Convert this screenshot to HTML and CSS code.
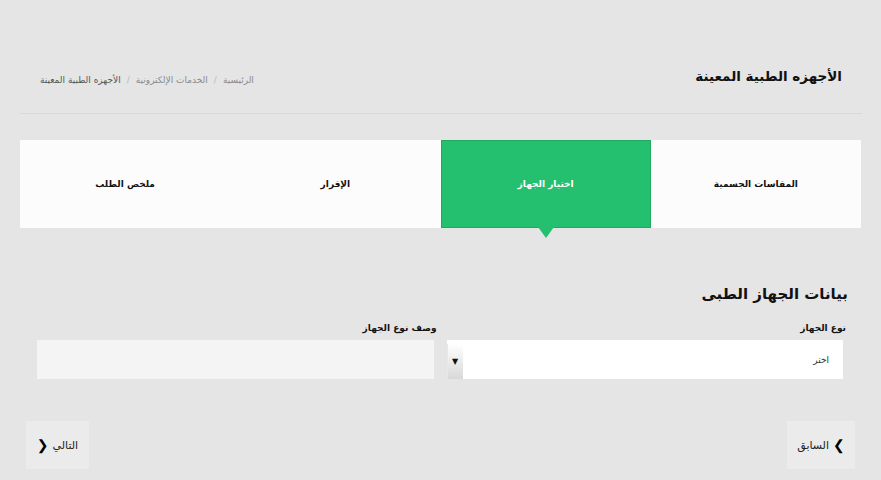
FILE: index.html
```html
<!DOCTYPE html>
<html lang="ar" dir="rtl">
<head>
<meta charset="utf-8">
<title>الأجهزه الطبية المعينة</title>
<link rel="stylesheet" href="styles.css">
</head>
<body>
<div class="page">
  <header class="head">
    <h1 class="title">الأجهزه الطبية المعينة</h1>
    <nav class="crumbs">
      <span class="crumb">الرئيسية</span>
      <span class="sep">/</span>
      <span class="crumb">الخدمات الإلكترونية</span>
      <span class="sep">/</span>
      <span class="crumb current">الأجهزه الطبية المعينة</span>
    </nav>
  </header>

  <div class="steps">
    <div class="step">المقاسات الجسمية</div>
    <div class="step active">اختيار الجهاز</div>
    <div class="step">الإقرار</div>
    <div class="step">ملخص الطلب</div>
  </div>

  <section class="form">
    <h2 class="section-title">بيانات الجهاز الطبى</h2>
    <div class="fields">
      <div class="field">
        <label class="label">نوع الجهاز</label>
        <div class="select">
          <span class="select-value">اختر</span>
          <span class="select-btn">▼</span>
        </div>
      </div>
      <div class="field">
        <label class="label">وصف نوع الجهاز</label>
        <div class="textbox"></div>
      </div>
    </div>
  </section>

  <div class="actions">
    <button class="btn"><span class="chev">❯</span><span>السابق</span></button>
    <button class="btn"><span>التالي</span><span class="chev">❮</span></button>
  </div>
</div>
</body>
</html>
```
FILE: styles.css
```css
html, body {
  margin: 0;
  padding: 0;
  background: #e5e5e5;
  font-family: "DejaVu Sans", "Noto Sans", sans-serif;
  color: #111;
}
.page {
  width: 881px;
  height: 480px;
  box-sizing: border-box;
  padding: 0 19px 0 20px;
  display: flex;
  flex-direction: column;
}
.head {
  display: flex;
  justify-content: space-between;
  align-items: center;
  height: 114px;
  box-sizing: border-box;
  padding: 38px 20px 0 20px;
  border-bottom: 1px solid #d8d8d8;
}
.title {
  margin: 0;
  font-size: 13.5px;
  font-weight: bold;
  color: #111;
}
.crumbs {
  display: flex;
  align-items: center;
  gap: 6px;
  font-size: 9px;
  color: #8a8a8a;
  padding-top: 8px;
}
.sep { color: #bbb; }
.crumb.current { color: #555; }
.steps {
  margin-top: 26px;
  display: grid;
  grid-template-columns: repeat(4, 1fr);
  height: 88px;
  background: #fcfcfc;
  margin-right: 1px;
}
.step {
  display: flex;
  align-items: center;
  justify-content: center;
  font-size: 9px;
  font-weight: bold;
  color: #111;
  position: relative;
}
.step.active {
  background: #25c06f;
  color: #fff;
  border: 1px solid #1fa85f;
}
.step.active::after {
  content: "";
  position: absolute;
  bottom: -11px;
  left: 50%;
  margin-left: -8px;
  border-left: 8px solid transparent;
  border-right: 8px solid transparent;
  border-top: 11px solid #25c06f;
}
.form {
  padding: 0 19px 0 17px;
}
.section-title {
  margin: 55px -5px 0 0;
  font-size: 15px;
  font-weight: bold;
  height: 22px;
  line-height: 22px;
}
.fields {
  margin-top: 16px;
  display: grid;
  grid-template-columns: 1fr 1fr;
  gap: 13px;
}
.field {
  display: flex;
  flex-direction: column;
}
.label {
  font-size: 9px;
  font-weight: bold;
  height: 15px;
  line-height: 15px;
  margin-right: -3px;
  margin-bottom: 4px;
}
.select {
  height: 39px;
  background: #fff;
  display: flex;
  align-items: center;
  justify-content: space-between;
  padding-right: 14px;
  box-sizing: border-box;
}
.select-value {
  font-size: 9px;
  color: #333;
}
.select-btn {
  align-self: stretch;
  margin-top: 4px;
  width: 15px;
  display: flex;
  align-items: center;
  justify-content: center;
  font-size: 8px;
  color: #111;
  background: linear-gradient(to bottom, #ffffff, #d8d8d8);
  border-left: 1px solid #e8e8e8;
}
.textbox {
  height: 39px;
  background: #f4f4f4;
}
.actions {
  margin-top: 42px;
  display: flex;
  justify-content: space-between;
  padding: 0 7px 0 6px;
}
.btn {
  height: 48px;
  border: none;
  background: #ebebeb;
  font-family: inherit;
  font-size: 11px;
  color: #222;
  display: flex;
  align-items: center;
  gap: 4px;
  padding: 0 12px;
}
.btn:first-child { width: 68px; justify-content: center; }
.btn:last-child { width: 63px; justify-content: center; }
.chev {
  font-size: 14px;
  font-weight: bold;
  color: #000;
}
```
